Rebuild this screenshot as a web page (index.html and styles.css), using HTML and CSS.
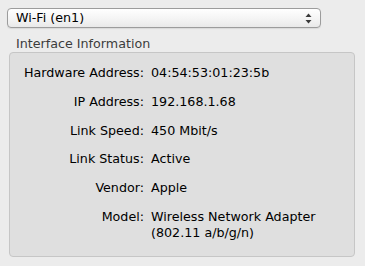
FILE: index.html
```html
<!DOCTYPE html>
<html lang="en">
<head>
  <meta charset="UTF-8" />
  <title>Network Utility | Info</title>
  <link rel="stylesheet" href="styles.css">
</head>
<body>
  <div class="popup">
    <span class="popup-label">Wi-Fi (en1)</span>
    <svg class="popup-arrows" width="7" height="11" viewBox="0 0 7 11">
      <polygon points="3.5,0.5 6.5,4 0.5,4" fill="#3a3a3a"/>
      <polygon points="0.5,7 6.5,7 3.5,10.5" fill="#3a3a3a"/>
    </svg>
  </div>

  <div class="group-title">Interface Information</div>
  <div class="group">
    <div class="info">
      <div class="key">Hardware Address:</div>
      <div class="val">04:54:53:01:23:5b</div>
      <div class="key">IP Address:</div>
      <div class="val">192.168.1.68</div>
      <div class="key">Link Speed:</div>
      <div class="val">450 Mbit/s</div>
      <div class="key">Link Status:</div>
      <div class="val">Active</div>
      <div class="key">Vendor:</div>
      <div class="val">Apple</div>
      <div class="key">Model:</div>
      <div class="val">Wireless Network Adapter<br>(802.11 a/b/g/n)</div>
    </div>
  </div>
</body>
</html>
```

FILE: styles.css
```css
* {
  margin: 0;
  padding: 0;
  box-sizing: border-box;
}

body {
  font-family: 'DejaVu Sans', sans-serif;
  font-size: 12.7px;
  background: #ececec;
  color: #000;
  padding: 8px 0 0 7px;
  width: 365px;
  height: 266px;
  overflow: hidden;
}

.popup {
  width: 314px;
  height: 20px;
  border: 1px solid #9c9c9c;
  border-radius: 4px;
  background: linear-gradient(#ffffff, #f3f3f3 60%, #e9e9e9);
  display: flex;
  align-items: center;
  justify-content: space-between;
  padding: 0 8px 0 8px;
  box-shadow: 0 1px 1px rgba(0, 0, 0, 0.08);
}

.popup-label {
  line-height: 18px;
}

.popup-arrows {
  display: block;
}

.group-title {
  margin: 8px 0 0 9px;
  color: #3c3c3c;
  line-height: 16px;
}

.group {
  margin: 0 0 0 2px;
  width: 346px;
  height: 205px;
  background: #dfdfdf;
  border: 1px solid #c6c6c6;
  border-radius: 4px;
  padding-top: 12px;
}

.info {
  display: grid;
  grid-template-columns: 134px 1fr;
  column-gap: 7px;
  row-gap: 12.8px;
  line-height: 16px;
}

.key {
  text-align: right;
}
```
